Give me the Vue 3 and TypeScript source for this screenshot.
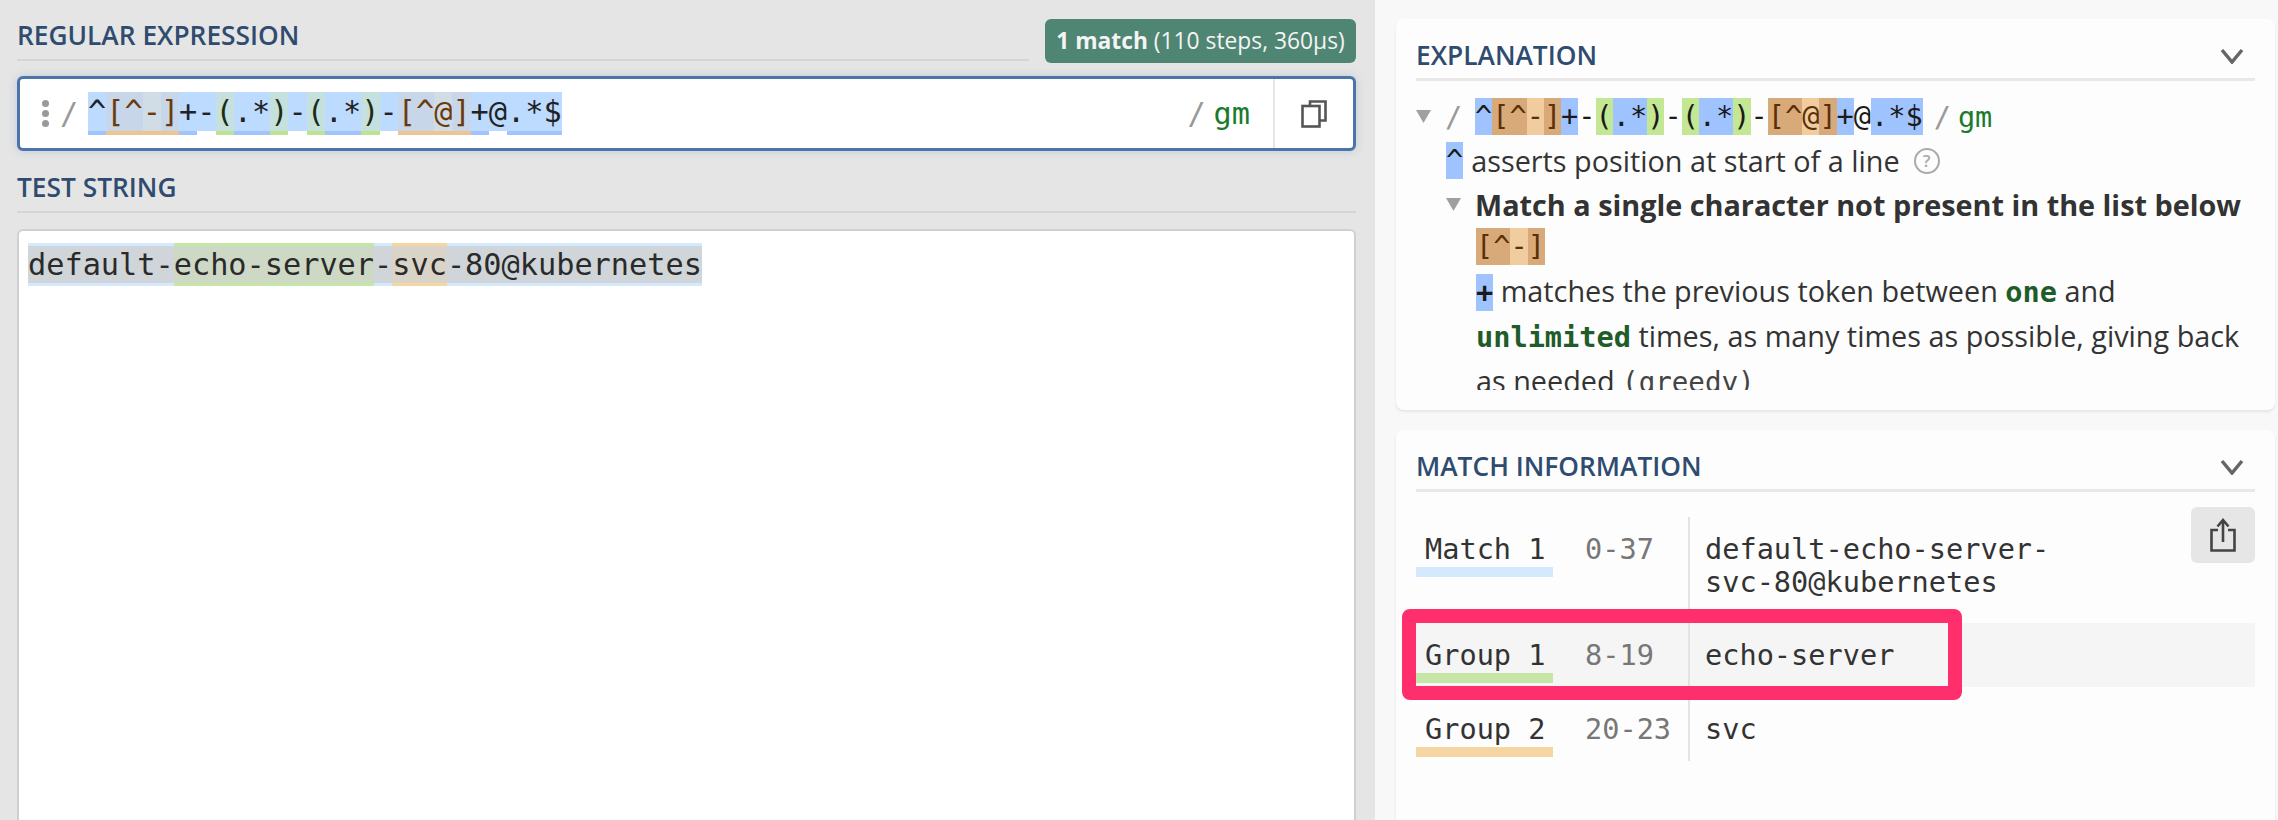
<script setup lang="ts">
interface Tok { t: string; c: string }
const editorTokens: Tok[] = [
  { t: '^', c: 'u-b' }, { t: '[', c: 'u-o k-br' }, { t: '^', c: 'u-o k-in k-br' }, { t: '-', c: 'u-o k-alt k-br' }, { t: ']', c: 'u-o k-br' },
  { t: '+', c: 'u-b' }, { t: '-', c: '' }, { t: '(', c: 'u-g k-gr' }, { t: '.*', c: 'u-b' }, { t: ')', c: 'u-g k-gr' },
  { t: '-', c: '' }, { t: '(', c: 'u-g k-gr' }, { t: '.*', c: 'u-b' }, { t: ')', c: 'u-g k-gr' }, { t: '-', c: '' },
  { t: '[', c: 'u-o k-br' }, { t: '^', c: 'u-o k-in k-br' }, { t: '@', c: 'u-o k-alt k-br' }, { t: ']', c: 'u-o k-br' },
  { t: '+', c: 'u-b' }, { t: '@', c: '' }, { t: '.*', c: 'u-b' }, { t: '$', c: 'u-b' }
]
const explainTokens: Tok[] = [
  { t: '^', c: 'blue' }, { t: '[^', c: 'or' }, { t: '-', c: 'orl' }, { t: ']', c: 'or' }, { t: '+', c: 'blue' }, { t: '-', c: '' },
  { t: '(', c: 'green' }, { t: '.*', c: 'blue' }, { t: ')', c: 'green' }, { t: '-', c: '' },
  { t: '(', c: 'green' }, { t: '.*', c: 'blue' }, { t: ')', c: 'green' }, { t: '-', c: '' },
  { t: '[^', c: 'or' }, { t: '@', c: 'orl' }, { t: ']', c: 'or' }, { t: '+', c: 'blue' }, { t: '@', c: '' }, { t: '.*$', c: 'blue' }
]
interface Row { name: string; range: string; lines: string[]; bar: string; cls: string }
const rows: Row[] = [
  { name: 'Match 1', range: '0-37', lines: ['default-echo-server-', 'svc-80@kubernetes'], bar: 'bar-m', cls: 'row-m' },
  { name: 'Group 1', range: '8-19', lines: ['echo-server'], bar: 'bar-g', cls: 'row-a' },
  { name: 'Group 2', range: '20-23', lines: ['svc'], bar: 'bar-o', cls: 'row-b' }
]
</script>

<template>
  <div class="page">
    <section class="left">
      <div class="head">
        <h2 class="title title-re">REGULAR EXPRESSION</h2>
        <div class="badge"><b>1 match</b> (110 steps, 360µs)</div>
      </div>
      <div class="input">
        <div class="grip"><i></i><i></i><i></i></div>
        <span class="mono slash">/</span>
        <div class="mono regex">
          <span v-for="(k, i) in editorTokens" :key="i" class="etok" :class="k.c">{{ k.t }}</span>
        </div>
        <span class="mono slash end">/</span>
        <span class="mono flags">gm</span>
        <div class="copy">
          <svg width="26" height="28" viewBox="0 0 26 28" fill="none" stroke="#555" stroke-width="2.6">
            <path d="M9 6V1.5h15.5V20.500H19" />
            <rect x="1.500" y="6" width="17" height="20.500" />
          </svg>
        </div>
      </div>
      <div class="head2"><h2 class="title">TEST STRING</h2></div>
      <div class="test">
        <div class="mono tline"><span class="m">default-</span><span class="m g1">echo-server</span><span class="m">-</span><span class="m g2">svc</span><span class="m">-80@kubernetes</span></div>
      </div>
    </section>

    <aside class="right">
      <div class="card card-ex">
        <div class="chead">
          <h2 class="title">EXPLANATION</h2>
          <svg class="chev" width="24" height="16" viewBox="0 0 24 16" fill="none" stroke="#666" stroke-width="3.500"><path d="M2 2l10 12L22 2" /></svg>
        </div>
        <div class="ex-body">
          <div class="ex-line">
            <svg class="tri" width="15" height="13" viewBox="0 0 15 13"><path d="M0 0h15L7.500 13z" fill="#a0a0a0" /></svg>
            <span class="mono slash ex-s1">/</span>
            <span class="mono ex-re"><span v-for="(k, i) in explainTokens" :key="i" class="chip" :class="k.c">{{ k.t }}</span></span>
            <span class="mono slash ex-s2">/</span>
            <span class="mono flags ex-f">gm</span>
          </div>
          <div class="ex-line ind1">
            <span class="mono chip blue">^</span>
            <span class="txt">asserts position at start of a line</span>
            <span class="help">?</span>
          </div>
          <div class="ex-line ind1 ex-bold">
            <svg class="tri" width="15" height="13" viewBox="0 0 15 13"><path d="M0 0h15L7.500 13z" fill="#a0a0a0" /></svg>
            <b class="txt strong">Match a single character not present in the list below</b>
          </div>
          <div class="ex-line ind2"><span class="mono"><span class="chip or">[^</span><span class="chip orl">-</span><span class="chip or">]</span></span></div>
          <p class="ex-para">
            <span class="mono chip blue plus">+</span> matches the previous token between <b class="mono kw">one</b> and <b class="mono kw">unlimited</b> times, as many times as possible, giving back as needed <span class="mono greedy">(greedy)</span>
          </p>
        </div>
      </div>

      <div class="card card-mi">
        <div class="chead">
          <h2 class="title">MATCH INFORMATION</h2>
          <svg class="chev" width="24" height="16" viewBox="0 0 24 16" fill="none" stroke="#666" stroke-width="3.500"><path d="M2 2l10 12L22 2" /></svg>
        </div>
        <div class="table">
          <div v-for="r in rows" :key="r.name" class="row" :class="r.cls">
            <div class="cname">
              <div class="mono nm">{{ r.name }}</div>
              <div class="bar" :class="r.bar"></div>
            </div>
            <div class="mono crange">{{ r.range }}</div>
            <div class="mono cval"><div v-for="l in r.lines" :key="l">{{ l }}</div></div>
          </div>
          <div class="share">
            <svg width="26" height="34" viewBox="0 0 26 34" fill="none" stroke="#444" stroke-width="2.600">
              <path d="M8 12H1.500v20.500h23V12H18" />
              <path d="M13 24V2M7.500 8.500L13 2l5.500 6.500" />
            </svg>
          </div>
        </div>
      </div>
    </aside>

    <div class="annot"></div>
  </div>
</template>

<style>
html, body { margin: 0; background: #f8f8f8; }
</style>

<style scoped>
.page { position: relative; display: flex; width: 2278px; height: 820px; overflow: hidden; background: #f8f8f8; font-family: "Open Sans", sans-serif; color: #333; }
.mono { font-family: "DejaVu Sans Mono", monospace; }
.left { box-sizing: border-box; width: 1375px; height: 820px; padding: 19px 19px 0 17px; background: #e5e5e5; flex: none; }
.head { display: flex; height: 44px; gap: 16px; }
.title { margin: 0; font-size: 26.3px; font-weight: 600; line-height: 33px; color: #2f4c70; white-space: nowrap; }
.title-re { flex: 1; height: 42px; box-sizing: border-box; border-bottom: 2px solid #d5d5d5; }
.badge { box-sizing: border-box; width: 311px; height: 44px; background: #4f8673; color: #f4f4f4; border-radius: 6px; font-size: 22.8px; line-height: 44px; text-align: center; white-space: nowrap; }
.badge b { font-weight: 700; }
.input { box-sizing: border-box; margin-top: 13px; height: 75px; display: flex; align-items: center; background: #fff; border: 3px solid #4a74aa; border-radius: 6px; box-shadow: 0 0 8px rgba(74, 116, 170, .25); }
.grip { display: flex; flex-direction: column; gap: 3px; margin-left: 22px; width: 7px; }
.grip i { display: block; width: 7px; height: 7px; border-radius: 50%; background: #999; }
.slash { color: #999; font-size: 30.25px; }
.input > .slash { margin-left: 11px; width: 18px; }
.input > .slash.end { margin-left: auto; }
.regex { margin-left: 10px; font-size: 30.25px; white-space: nowrap; display: flex; background: linear-gradient(#bddaff, #bddaff) 0 0/100% 39px no-repeat; height: 43px; line-height: 39px; color: #222; }
.etok { display: block; height: 43px; box-sizing: border-box; }
.u-b { border-bottom: 4px solid #a0c4fb; }
.u-o { border-bottom: 4px solid #eec493; }
.u-g { border-bottom: 4px solid #bfe38f; }
.k-br { color: #6b3a0c; background: linear-gradient(#c7d6e8, #c7d6e8) 0 0/100% 39px no-repeat; }
.k-in { background: linear-gradient(#c7d6e8, #c7d6e8) 0 0/100% 39px no-repeat; }
.k-alt { background: linear-gradient(#d1dde6, #d1dde6) 0 0/100% 39px no-repeat; }
.k-gr { color: #1c2c12; background: linear-gradient(#c6e0de, #c6e0de) 0 0/100% 39px no-repeat; }
.flags { color: #1a7a2e; font-size: 30.25px; margin-left: 8px; }
.copy { margin-left: 23px; width: 80px; height: 100%; border-left: 2px solid #e5e5e5; display: flex; align-items: center; justify-content: center; box-sizing: border-box; }
.head2 { box-sizing: border-box; height: 62px; padding-top: 20px; border-bottom: 2px solid #d5d5d5; }
.test { box-sizing: border-box; margin-top: 16px; height: 700px; width: 1339px; padding: 12px 9px; background: #fff; border: 2px solid #d0d0d0; border-radius: 6px; }
.tline { font-size: 30.25px; line-height: 37px; color: #2a2a2a; white-space: nowrap; display: flex; }
.m { display: block; background: #d0d5d9; border-top: 3px solid #d4e9fd; border-bottom: 3px solid #d4e9fd; }
.g1 { background: #cdd9c5; border-color: #c5e6a6; }
.g2 { background: #dad3c7; border-color: #f5d6a3; }
.right { flex: 1; box-sizing: border-box; padding: 19px 3px 0 21px; min-width: 0; }
.card { box-sizing: border-box; background: #fdfdfd; border-radius: 8px; padding: 0 20px; box-shadow: 0 2px 3px rgba(0, 0, 0, .08); }
.card-ex { height: 391px; }
.card-mi { margin-top: 20px; height: 500px; }
.chead { display: flex; align-items: center; justify-content: space-between; box-sizing: border-box; height: 62px; padding-top: 14px; border-bottom: 3px solid #e8e8e8; }
.chev { margin-right: 11px; }
.ex-body { height: 309px; overflow: hidden; padding-top: 17px; box-sizing: border-box; font-size: 28.8px; }
.ex-line { display: flex; align-items: center; height: 37px; margin-bottom: 7px; white-space: nowrap; }
.ex-bold { margin-bottom: 5px; }
.ind2 { margin-bottom: 4px; }
.ex-s1 { margin-left: 14px; width: 30px; font-size: 28.6px; }
.ex-re { display: flex; font-size: 28.6px; margin-left: 0; }
.ex-s2 { margin-left: 11px; font-size: 28.6px; }
.ex-f { margin-left: 7px; font-size: 28.6px; }
.chip { display: inline-block; height: 37px; line-height: 37px; color: #1a1a1a; font-size: 28.6px; }
.blue { background: #9fc3ff; }
.or { background: #d8aa7a; color: #5a3008; }
.orl { background: #f0cc9f; color: #5a3008; }
.green { background: #c4e794; }
.ind1 { padding-left: 30px; }
.ind2 { padding-left: 60px; }
.txt { margin-left: 8px; }
.strong { margin-left: 14px; font-weight: 700; font-size: 28.8px; }
.help { box-sizing: border-box; width: 26px; height: 26px; margin-left: 14px; border: 2.500px solid #aaa; border-radius: 50%; font-size: 17px; line-height: 21px; text-align: center; color: #aaa; font-weight: 600; }
.ex-para { margin: 0; padding-left: 60px; font-size: 28.8px; line-height: 43px; }
.plus { font-weight: 700; }
.kw { color: #1e5c2a; font-size: 28.6px; }
.greedy { font-size: 27.5px; color: #444; }
.table { position: relative; padding-top: 25px; }
.row { display: flex; }
.cname { width: 137px; flex: none; }
.nm { padding-left: 9px; font-size: 28.6px; line-height: 33px; color: #333; white-space: nowrap; }
.bar { height: 10px; margin-top: 1px; }
.bar-m { background: #d4e9fd; }
.bar-g { background: #c5e6a6; }
.bar-o { background: #f5d6a3; }
.crange { width: 135px; flex: none; box-sizing: border-box; padding-left: 32px; font-size: 28.6px; line-height: 33px; color: #777; }
.cval { flex: 1; padding-left: 15px; border-left: 2px solid #e3e3e3; font-size: 28.6px; line-height: 33px; color: #333; }
.row > * { box-sizing: border-box; }
.row-m { height: 106px; }
.row-m .cname, .row-m .crange, .row-m .cval { padding-top: 16px; }
.row-a { height: 64px; background: #f5f5f5; }
.row-a .cname, .row-a .crange, .row-a .cval { padding-top: 16px; }
.row-b { height: 74px; }
.row-b .cname, .row-b .crange, .row-b .cval { padding-top: 26px; }
.share { position: absolute; right: 0; top: 15px; width: 64px; height: 56px; background: #e6e6e6; border-radius: 6px; display: flex; align-items: center; justify-content: center; }
.annot { position: absolute; left: 1402px; top: 609px; width: 560px; height: 91px; box-sizing: border-box; border: 14px solid #ff2e6c; border-radius: 8px; }
</style>
